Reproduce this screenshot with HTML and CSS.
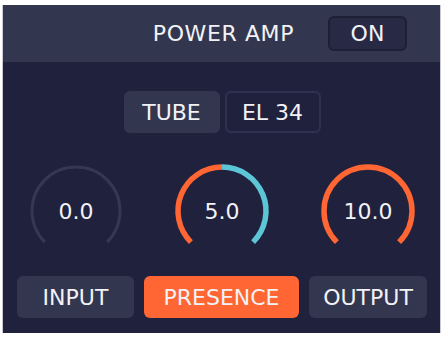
FILE: index.html
```html
<!DOCTYPE html>
<html>
<head>
<meta charset="utf-8">
<link rel="stylesheet" href="styles.css">
</head>
<body>
<div class="panel">
  <div class="header">
    <span class="title">POWER AMP</span>
    <div class="on-btn">ON</div>
  </div>
  <div class="main">
    <div class="tube-row">
      <div class="tube-label">TUBE</div>
      <div class="tube-value">EL 34</div>
    </div>
    <div class="grid">
      <svg class="knob" width="100" height="84" viewBox="0 0 100 84">
        <path class="arc-off" d="M18.89 78.11 A44 44 0 1 1 81.11 78.11"/>
        <text x="50" y="55" class="val">0.0</text>
      </svg>
      <svg class="knob" width="100" height="84" viewBox="0 0 100 84">
        <path class="arc-on" d="M18.89 78.11 A44 44 0 0 1 50 3"/>
        <path class="arc-rest" d="M50 3 A44 44 0 0 1 81.11 78.11"/>
        <text x="50" y="55" class="val">5.0</text>
      </svg>
      <svg class="knob" width="100" height="84" viewBox="0 0 100 84">
        <path class="arc-on" d="M18.89 78.11 A44 44 0 1 1 81.11 78.11"/>
        <text x="50" y="55" class="val">10.0</text>
      </svg>
      <div class="btn">INPUT</div>
      <div class="btn active">PRESENCE</div>
      <div class="btn">OUTPUT</div>
    </div>
  </div>
</div>
</body>
</html>
```
FILE: styles.css
```css
html, body {
  margin: 0;
  padding: 0;
  background: #ffffff;
}
body {
  padding: 5px 0 0 2px;
  font-family: "DejaVu Sans", sans-serif;
  color: #f2f2f6;
}
.panel {
  width: 437px;
  border-left: 1px solid #c9cad3;
  border-right: 1px solid #c9cad3;
  background: #1f213d;
}
.header {
  height: 57px;
  background: #33364f;
  display: flex;
  align-items: center;
  justify-content: flex-end;
  padding-right: 33px;
  box-sizing: border-box;
}
.title {
  font-size: 22px;
  letter-spacing: 0.6px;
  margin-right: 34px;
}
.on-btn {
  width: 79px;
  height: 35px;
  box-sizing: border-box;
  border: 2px solid #1d1f37;
  background: #282a45;
  border-radius: 6px;
  display: flex;
  align-items: center;
  justify-content: center;
  font-size: 22px;
}
.main {
  padding: 29px 13px 15px 14px;
}
.tube-row {
  display: flex;
  justify-content: center;
  gap: 5px;
}
.tube-label, .tube-value {
  width: 96px;
  height: 42px;
  box-sizing: border-box;
  border-radius: 6px;
  display: flex;
  align-items: center;
  justify-content: center;
  font-size: 22px;
}
.tube-label {
  background: #33364f;
}
.tube-value {
  border: 2px solid #2e3150;
  background: #1f213d;
}
.grid {
  margin-top: 31px;
  display: grid;
  grid-template-columns: 117px 155px 118px;
  column-gap: 10px;
  row-gap: 28px;
}
.knob {
  justify-self: center;
  display: block;
}
.knob path {
  fill: none;
}
.arc-off {
  stroke: #343852;
  stroke-width: 3;
}
.arc-on {
  stroke: #ff6633;
  stroke-width: 5.5;
}
.arc-rest {
  stroke: #5cc6d6;
  stroke-width: 5.5;
}
.val {
  fill: #f2f2f6;
  font-family: "DejaVu Sans", sans-serif;
  font-size: 22px;
  text-anchor: middle;
}
.btn {
  height: 42px;
  border-radius: 6px;
  background: #33364f;
  display: flex;
  align-items: center;
  justify-content: center;
  font-size: 22px;
}
.btn.active {
  background: #ff6633;
}
```
